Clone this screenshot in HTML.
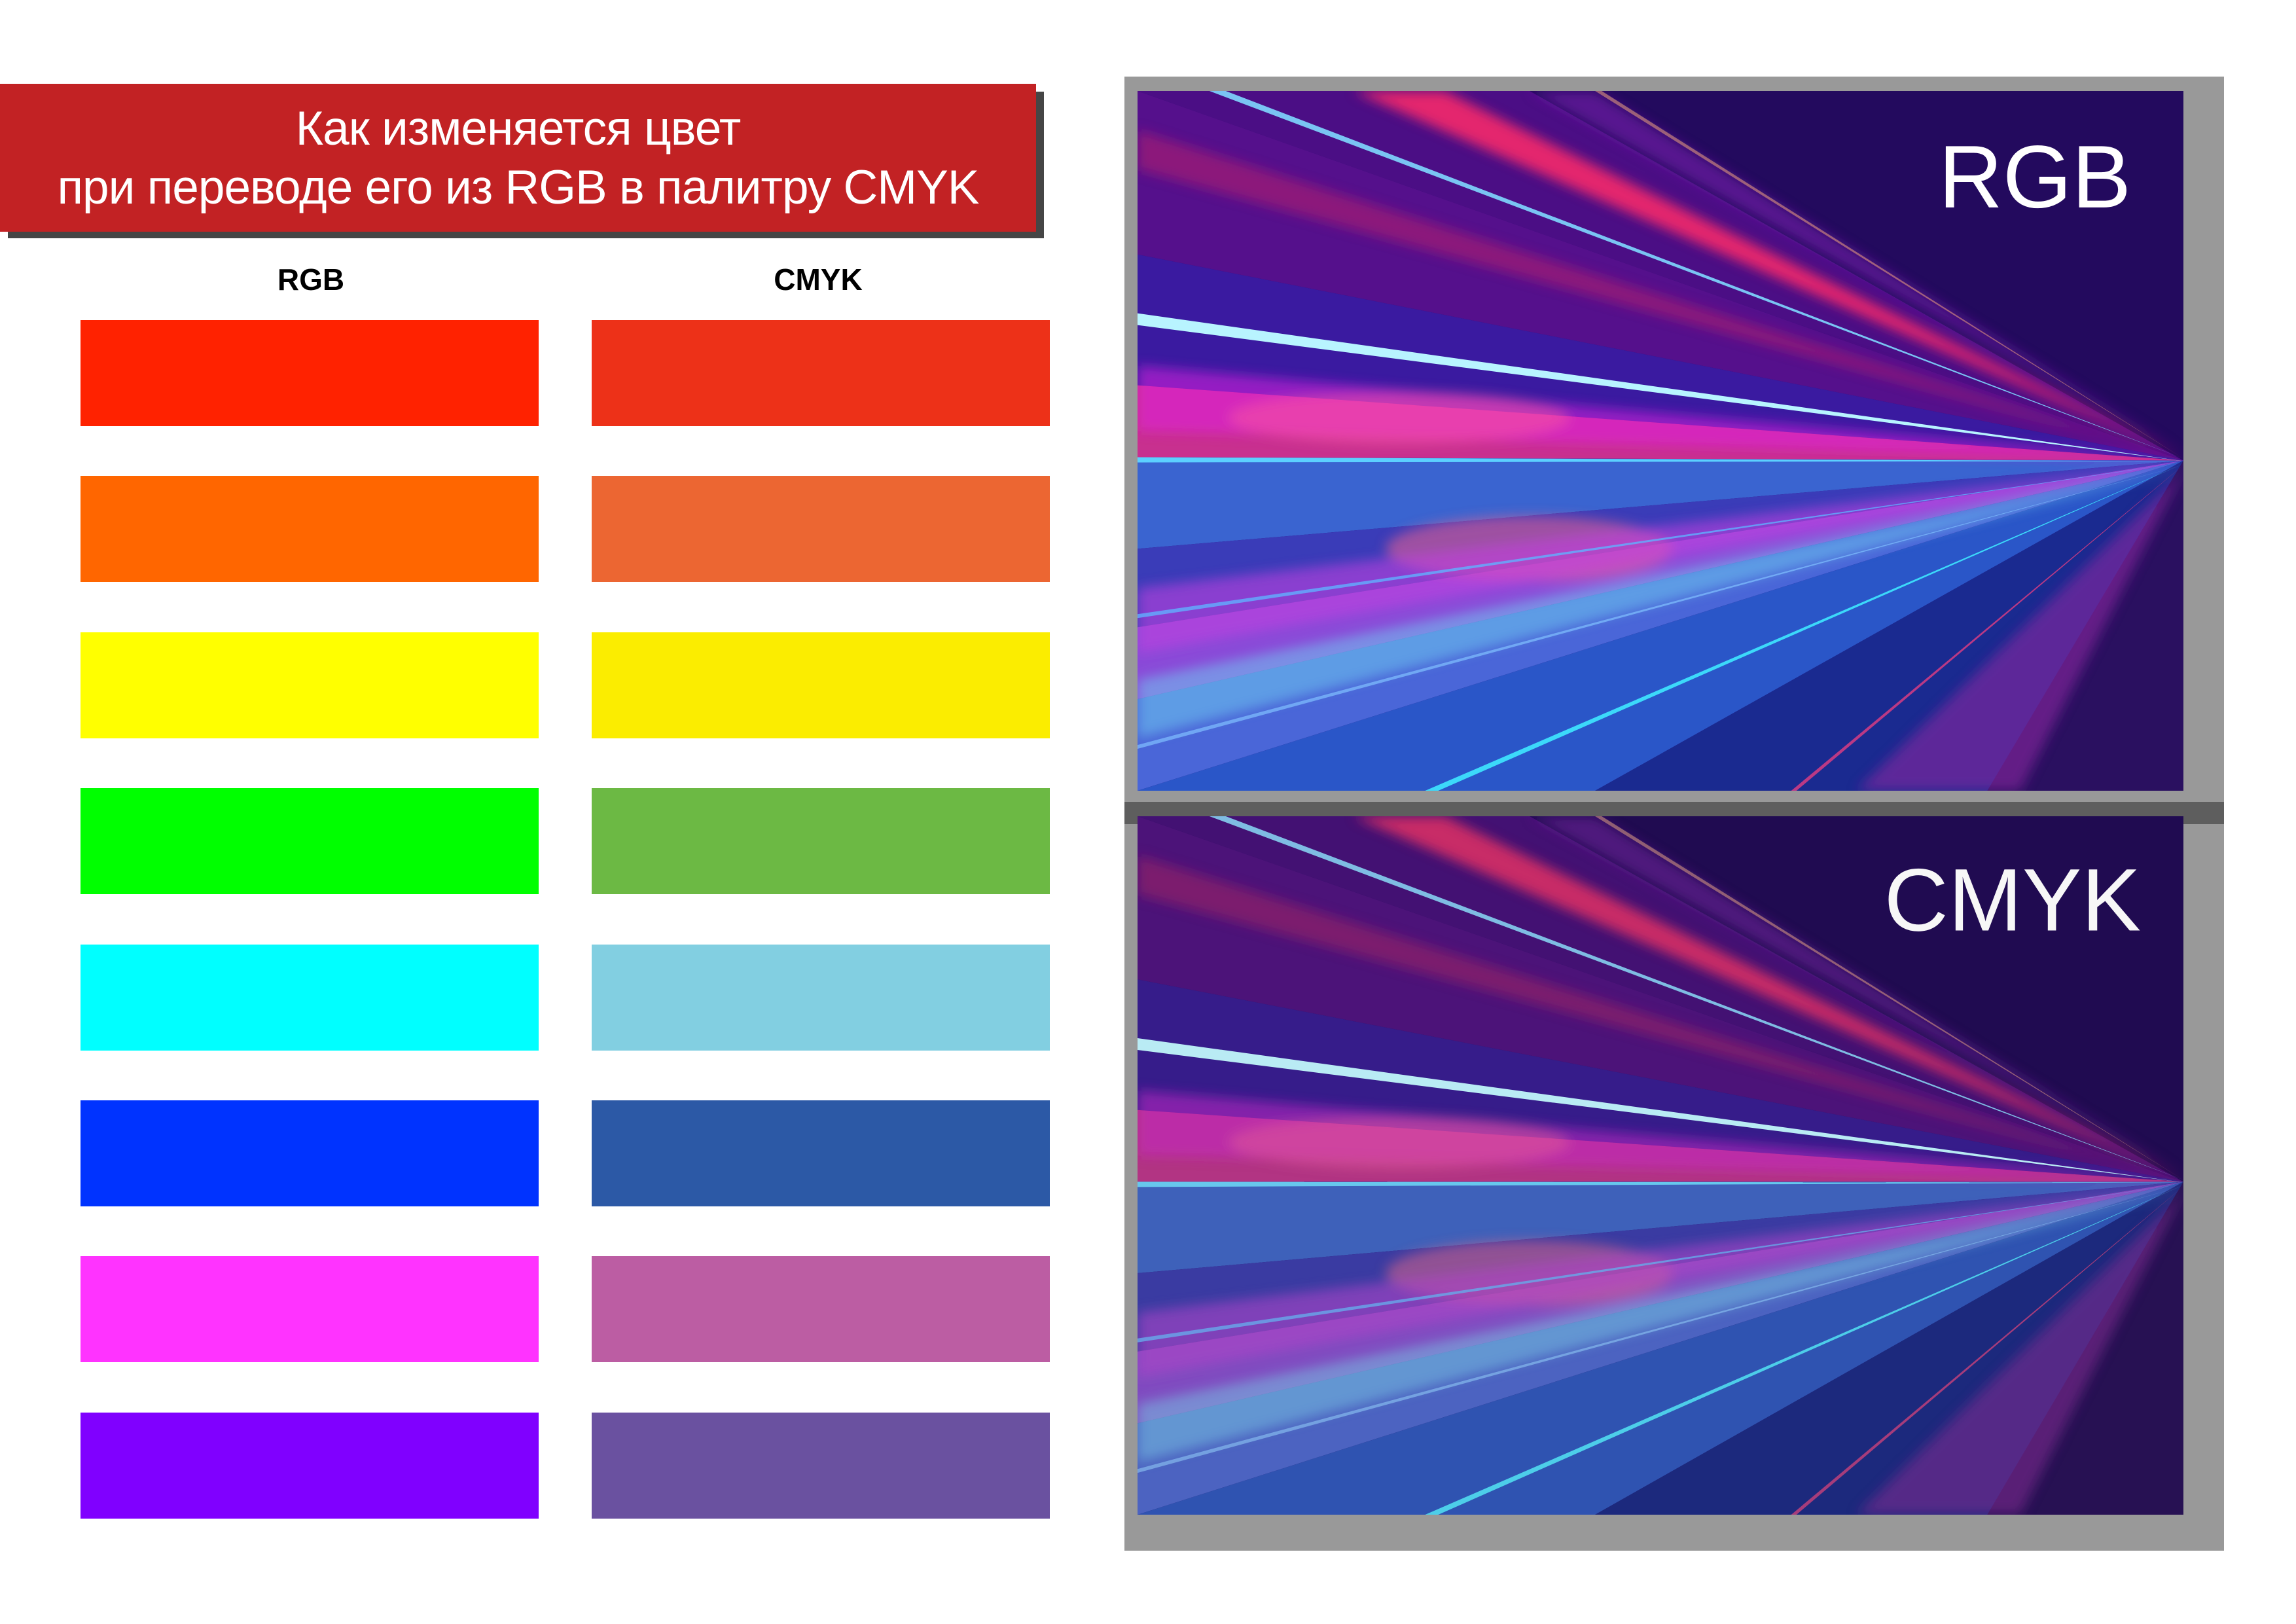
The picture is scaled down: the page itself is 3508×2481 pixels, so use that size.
<!DOCTYPE html>
<html><head><meta charset="utf-8"><style>
html,body{margin:0;padding:0;background:#fff;}
body{width:3508px;height:2481px;position:relative;overflow:hidden;font-family:"Liberation Sans","DejaVu Sans",sans-serif;}
.a{position:absolute;}
.sw{position:absolute;width:700px;height:162px;}
</style></head><body>
<div class="a" style="left:12px;top:140px;width:1583px;height:224px;background:#454545"></div>
<div class="a" style="left:0;top:128px;width:1583px;height:226px;background:#c22224"></div>
<div class="a" style="left:0;top:152px;width:1583px;text-align:center;color:#fff;font-size:73px;line-height:90px;white-space:nowrap;letter-spacing:-1px">Как изменяется цвет<br>при переводе его из RGB в палитру CMYK</div>
<div class="a" style="left:370px;top:400px;width:210px;text-align:center;font-weight:bold;font-size:46px;color:#000">RGB</div>
<div class="a" style="left:1150px;top:400px;width:200px;text-align:center;font-weight:bold;font-size:46px;color:#000">CMYK</div>

<div class="sw" style="left:123px;top:489px;background:#ff2200"></div>
<div class="sw" style="left:904px;top:489px;background:#ed3118"></div>
<div class="sw" style="left:123px;top:727px;background:#ff6600"></div>
<div class="sw" style="left:904px;top:727px;background:#ec6632"></div>
<div class="sw" style="left:123px;top:966px;background:#ffff00"></div>
<div class="sw" style="left:904px;top:966px;background:#fbed00"></div>
<div class="sw" style="left:123px;top:1204px;background:#00ff00"></div>
<div class="sw" style="left:904px;top:1204px;background:#6cb944"></div>
<div class="sw" style="left:123px;top:1443px;background:#00ffff"></div>
<div class="sw" style="left:904px;top:1443px;background:#82cfe1"></div>
<div class="sw" style="left:123px;top:1681px;background:#0033ff"></div>
<div class="sw" style="left:904px;top:1681px;background:#2c59a6"></div>
<div class="sw" style="left:123px;top:1919px;background:#ff33ff"></div>
<div class="sw" style="left:904px;top:1919px;background:#bc5da3"></div>
<div class="sw" style="left:123px;top:2158px;background:#8000ff"></div>
<div class="sw" style="left:904px;top:2158px;background:#6a51a0"></div>

<div class="a" style="left:1718px;top:117px;width:1680px;height:2252px;background:#999"></div>
<div class="a" style="left:1718px;top:1225px;width:1680px;height:34px;background:#5e5e5e"></div>

<svg class="a" style="left:1738px;top:139px" width="1598" height="1069" viewBox="0 0 1600 1070" preserveAspectRatio="none">
<defs><filter id="b1" x="-5%" y="-5%" width="110%" height="110%"><feGaussianBlur stdDeviation="9"/></filter></defs>
<rect width="1600" height="1070" fill="#2a0c70"/>
<g>
<polygon points="0,0 600,0 1600,565" fill="#4b0e85"/>
<polygon points="600,0 1600,0 1600,565" fill="#230a5e"/>
<polygon points="0,0 0,250 1600,565" fill="#55108c"/>
<polygon points="0,250 0,450 1600,565" fill="#3a1aa0"/>
<polygon points="0,450 0,560 1600,565" fill="#c8308f"/>
<polygon points="0,560 0,700 1600,565" fill="#3a64d0"/>
<polygon points="0,700 0,820 1600,565" fill="#3a3cb8"/>
<polygon points="0,820 0,930 1600,565" fill="#8a4ad8"/>
<polygon points="0,930 0,1070 1600,565" fill="#4a66d8"/>
<polygon points="0,1070 700,1070 1600,565" fill="#2a56c8"/>
<polygon points="700,1070 1300,1070 1600,565" fill="#1a2a90"/>
<polygon points="1300,1070 1600,1070 1600,565" fill="#2a1060"/>
</g>
<g filter="url(#b1)">
<polygon points="330,0 470,0 1600,560" fill="#ff2a6a" opacity=".85"/>
<polygon points="0,420 0,520 1600,565" fill="#e020e0" opacity=".55"/>
<polygon points="0,60 0,120 1600,565" fill="#b01a70" opacity=".6"/>
<polygon points="600,0 700,0 1600,555" fill="#7a20b0" opacity=".6"/>
<ellipse cx="600" cy="700" rx="220" ry="50" fill="#f06090" opacity=".55"/>
<ellipse cx="400" cy="500" rx="260" ry="40" fill="#ff60a0" opacity=".45"/>
<polygon points="0,760 0,860 1600,570" fill="#c040e0" opacity=".6"/>
<polygon points="0,900 0,990 1600,575" fill="#70c8f0" opacity=".55"/>
<polygon points="1100,1070 1350,1070 1600,580" fill="#8a2aa0" opacity=".6"/>
</g>
<g>
<polygon points="110,0 135,0 1600,562" fill="#7fd8ff" opacity=".9"/>
<polygon points="0,340 0,358 1600,566" fill="#b8f4ff"/>
<polygon points="0,560 0,568 1600,566" fill="#5cd0ff"/>
<polygon points="0,800 0,806 1600,568" fill="#60b0ff" opacity=".8"/>
<polygon points="440,1070 460,1070 1600,570" fill="#3ee8ff" opacity=".9"/>
<polygon points="0,1000 0,1006 1600,572" fill="#80c0ff" opacity=".7"/>
<polygon points="1000,1070 1008,1070 1600,572" fill="#ff4080" opacity=".7"/>
<polygon points="700,0 710,0 1600,562" fill="#ffb080" opacity=".5"/>
</g>
<text x="1520" y="178" text-anchor="end" font-family="Liberation Sans, sans-serif" font-size="136" fill="#fff">RGB</text>
</svg>

<svg class="a" style="left:1738px;top:1247px;filter:saturate(0.85) brightness(0.97)" width="1598" height="1067" viewBox="0 0 1600 1070" preserveAspectRatio="none">
<defs><filter id="b2" x="-5%" y="-5%" width="110%" height="110%"><feGaussianBlur stdDeviation="9"/></filter></defs>
<rect width="1600" height="1070" fill="#2a0c70"/>
<g>
<polygon points="0,0 600,0 1600,560" fill="#4b0e85"/>
<polygon points="600,0 1600,0 1600,560" fill="#230a5e"/>
<polygon points="0,0 0,250 1600,560" fill="#55108c"/>
<polygon points="0,250 0,450 1600,560" fill="#3a1aa0"/>
<polygon points="0,450 0,560 1600,560" fill="#c8308f"/>
<polygon points="0,560 0,700 1600,560" fill="#3a64d0"/>
<polygon points="0,700 0,820 1600,560" fill="#3a3cb8"/>
<polygon points="0,820 0,930 1600,560" fill="#8a4ad8"/>
<polygon points="0,930 0,1070 1600,560" fill="#4a66d8"/>
<polygon points="0,1070 700,1070 1600,560" fill="#2a56c8"/>
<polygon points="700,1070 1300,1070 1600,560" fill="#1a2a90"/>
<polygon points="1300,1070 1600,1070 1600,560" fill="#2a1060"/>
</g>
<g filter="url(#b2)">
<polygon points="330,0 470,0 1600,555" fill="#ff2a6a" opacity=".85"/>
<polygon points="0,420 0,520 1600,560" fill="#e020e0" opacity=".55"/>
<polygon points="0,60 0,120 1600,560" fill="#b01a70" opacity=".6"/>
<polygon points="600,0 700,0 1600,550" fill="#7a20b0" opacity=".6"/>
<ellipse cx="600" cy="700" rx="220" ry="50" fill="#f06090" opacity=".55"/>
<ellipse cx="400" cy="500" rx="260" ry="40" fill="#ff60a0" opacity=".45"/>
<polygon points="0,760 0,860 1600,565" fill="#c040e0" opacity=".6"/>
<polygon points="0,900 0,990 1600,570" fill="#70c8f0" opacity=".55"/>
<polygon points="1100,1070 1350,1070 1600,575" fill="#8a2aa0" opacity=".6"/>
</g>
<g>
<polygon points="110,0 135,0 1600,557" fill="#7fd8ff" opacity=".9"/>
<polygon points="0,340 0,358 1600,561" fill="#b8f4ff"/>
<polygon points="0,560 0,568 1600,561" fill="#5cd0ff"/>
<polygon points="0,800 0,806 1600,563" fill="#60b0ff" opacity=".8"/>
<polygon points="440,1070 460,1070 1600,565" fill="#3ee8ff" opacity=".9"/>
<polygon points="0,1000 0,1006 1600,567" fill="#80c0ff" opacity=".7"/>
<polygon points="1000,1070 1008,1070 1600,567" fill="#ff4080" opacity=".7"/>
<polygon points="700,0 710,0 1600,557" fill="#ffb080" opacity=".5"/>
</g>
<text x="1535" y="175" text-anchor="end" font-family="Liberation Sans, sans-serif" font-size="136" fill="#fff">CMYK</text>
</svg>
</body></html>
